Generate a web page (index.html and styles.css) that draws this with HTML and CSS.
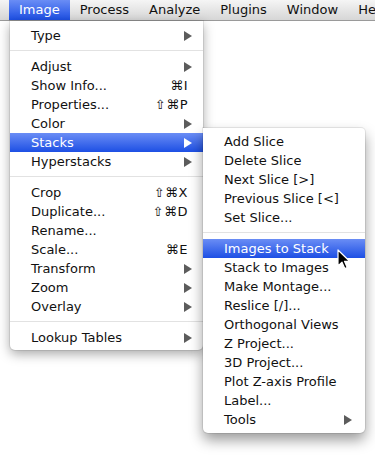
FILE: index.html
```html
<!DOCTYPE html>
<html>
<head>
<meta charset="utf-8">
<link rel="stylesheet" href="styles.css">
</head>
<body>
<div class="menubar">
  <span class="bar-item active">Image</span>
  <span class="bar-item">Process</span>
  <span class="bar-item">Analyze</span>
  <span class="bar-item">Plugins</span>
  <span class="bar-item">Window</span>
  <span class="bar-item">Help</span>
</div>
<div class="desk">
  <div class="menu main-menu">
    <div class="item"><span class="label">Type</span><span class="arrow"></span></div>
    <div class="sep"></div>
    <div class="item"><span class="label">Adjust</span><span class="arrow"></span></div>
    <div class="item"><span class="label">Show Info...</span><span class="key">⌘I</span></div>
    <div class="item"><span class="label">Properties...</span><span class="key">⇧⌘P</span></div>
    <div class="item"><span class="label">Color</span><span class="arrow"></span></div>
    <div class="item selected has-sub"><span class="label">Stacks</span><span class="arrow"></span>
      <div class="menu sub-menu">
        <div class="item"><span class="label">Add Slice</span></div>
        <div class="item"><span class="label">Delete Slice</span></div>
        <div class="item"><span class="label">Next Slice [&gt;]</span></div>
        <div class="item"><span class="label">Previous Slice [&lt;]</span></div>
        <div class="item"><span class="label">Set Slice...</span></div>
        <div class="sep"></div>
        <div class="item selected hover"><span class="label">Images to Stack</span>
          <svg class="cursor" width="14" height="22" viewBox="0 0 14 22"><path d="M1 1 L1 17 L5 13.2 L7.8 19.6 L10.2 18.6 L7.5 12.3 L12.6 12.3 Z" fill="#000" stroke="#fff" stroke-width="1.2" stroke-linejoin="round"/></svg>
        </div>
        <div class="item"><span class="label">Stack to Images</span></div>
        <div class="item"><span class="label">Make Montage...</span></div>
        <div class="item"><span class="label">Reslice [/]...</span></div>
        <div class="item"><span class="label">Orthogonal Views</span></div>
        <div class="item"><span class="label">Z Project...</span></div>
        <div class="item"><span class="label">3D Project...</span></div>
        <div class="item"><span class="label">Plot Z-axis Profile</span></div>
        <div class="item"><span class="label">Label...</span></div>
        <div class="item"><span class="label">Tools</span><span class="arrow"></span></div>
      </div>
    </div>
    <div class="item"><span class="label">Hyperstacks</span><span class="arrow"></span></div>
    <div class="sep"></div>
    <div class="item"><span class="label">Crop</span><span class="key">⇧⌘X</span></div>
    <div class="item"><span class="label">Duplicate...</span><span class="key">⇧⌘D</span></div>
    <div class="item"><span class="label">Rename...</span></div>
    <div class="item"><span class="label">Scale...</span><span class="key">⌘E</span></div>
    <div class="item"><span class="label">Transform</span><span class="arrow"></span></div>
    <div class="item"><span class="label">Zoom</span><span class="arrow"></span></div>
    <div class="item"><span class="label">Overlay</span><span class="arrow"></span></div>
    <div class="sep"></div>
    <div class="item"><span class="label">Lookup Tables</span><span class="arrow"></span></div>
  </div>
</div>
</body>
</html>
```
FILE: styles.css
```css
html, body {
  margin: 0;
  padding: 0;
  background: #fff;
  width: 375px;
  height: 459px;
  overflow: hidden;
}
body {
  font-family: "DejaVu Sans", "Liberation Sans", sans-serif;
  font-size: 13px;
  color: #111;
}
.menubar {
  display: flex;
  height: 20px;
  padding-left: 9px;
  background: linear-gradient(#f5f5f5, #d6d6d6);
  border-bottom: 1px solid #9a9a9a;
  white-space: nowrap;
  overflow: hidden;
}
.bar-item {
  padding: 0 10px;
  line-height: 20px;
  flex: none;
}
.bar-item.active {
  background: linear-gradient(#6a8df5, #1d4fe4);
  color: #fff;
}
.desk {
  position: relative;
}
.menu {
  position: absolute;
  background: #fff;
  box-shadow: 0 4px 12px rgba(0, 0, 0, 0.35), 0 0 0 1px rgba(0, 0, 0, 0.08);
}
.main-menu {
  left: 10px;
  top: 0;
  width: 193px;
  padding: 5px 0 3px;
  border-radius: 0 0 5px 5px;
}
.sub-menu {
  left: 100%;
  top: -5px;
  width: 162px;
  padding: 4px 0;
  border-radius: 0 4px 5px 5px;
  box-shadow: 0 7px 14px rgba(0, 0, 0, 0.4), 0 0 0 1px rgba(0, 0, 0, 0.08);
  color: #111;
}
.item {
  position: relative;
  display: flex;
  align-items: center;
  height: 19px;
  padding: 0 11px 0 21px;
}
.item .label {
  flex: 1;
  white-space: nowrap;
}
.item .key {
  padding-right: 4px;
  letter-spacing: 0.5px;
}
.arrow {
  width: 0;
  height: 0;
  border-left: 8px solid #5c5c5c;
  border-top: 5px solid transparent;
  border-bottom: 5px solid transparent;
}
.item.selected {
  background: linear-gradient(#6a8df5, #1d4fe4);
  color: #fff;
}
.item.selected > .arrow {
  border-left-color: #fff;
}
.sub-menu .item {
  padding-right: 13px;
}
.sep {
  height: 1px;
  margin: 5px 0 6px;
  background: #e2e2e2;
}
.cursor {
  position: absolute;
  left: 134px;
  top: 10px;
}
```
